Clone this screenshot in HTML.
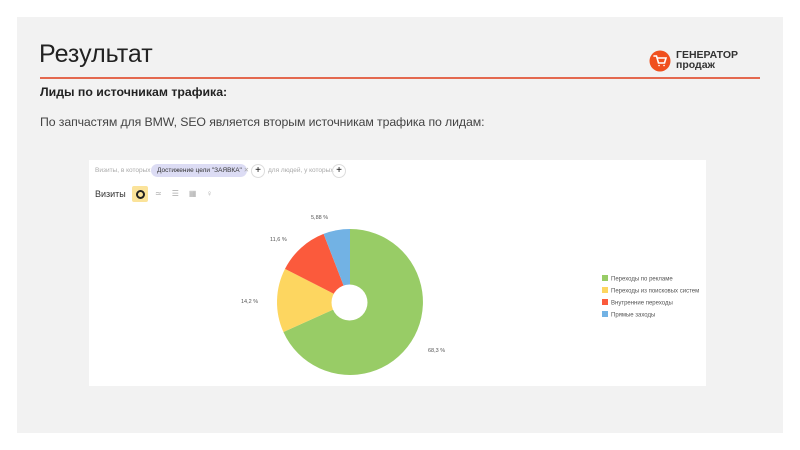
<!DOCTYPE html>
<html><head><meta charset="utf-8"><style>
body{margin:0;width:800px;height:450px;background:#fff;font-family:"Liberation Sans",sans-serif;position:relative;overflow:hidden}
.slide{position:absolute;left:17px;top:17px;width:766px;height:416px;background:#f2f2f2}
.a{position:absolute;white-space:nowrap}
</style></head><body>
<div class="slide"></div>
<div class="a" style="left:39px;top:40px;font-size:25px;color:#222">Результат</div>
<div class="a" style="left:40px;top:77px;width:720px;height:2px;background:#e4694f"></div>
<div class="a" style="left:40px;top:85px;font-size:12.3px;font-weight:bold;color:#222">Лиды по источникам трафика:</div>
<div class="a" style="left:40px;top:115px;font-size:12.3px;color:#444;letter-spacing:-0.1px">По запчастям для BMW, SEO является вторым источникам трафика по лидам:</div>
<svg class="a" style="left:649px;top:50px" width="22" height="22" viewBox="0 0 22 22"><circle cx="11" cy="11" r="10.5" fill="#f0501e"/><path d="M5 6h2.5l2 7h6l1.5-5H8.5M10 15.5h0.1M15 15.5h0.1" stroke="#fff" stroke-width="1.6" fill="none" stroke-linecap="round"/></svg>
<div class="a" style="left:676px;top:50px;font-size:10.5px;font-weight:bold;color:#333;line-height:10px">ГЕНЕРАТОР<br>продаж</div>
<div class="a" style="left:89px;top:160px;width:617px;height:226px;background:#fff"></div>
<div class="a" style="left:95px;top:167px;font-size:6.5px;color:#aaa">Визиты, в которых</div>
<div class="a" style="left:151px;top:164px;width:96px;height:13px;border-radius:7px;background:#dcdcf4;font-size:6.5px;color:#333;line-height:13px;padding-left:6px;box-sizing:border-box">Достижение цели "ЗАЯВКА" <span style="color:#aaa">✕</span></div>
<div class="a" style="left:251px;top:164px;width:12px;height:12px;border-radius:50%;border:1px solid #ddd;text-align:center;font-size:10px;line-height:12px">+</div>
<div class="a" style="left:268px;top:167px;font-size:6.5px;color:#aaa">для людей, у которых</div>
<div class="a" style="left:332px;top:164px;width:12px;height:12px;border-radius:50%;border:1px solid #ddd;text-align:center;font-size:10px;line-height:12px">+</div>
<div class="a" style="left:95px;top:189px;font-size:9px;color:#333">Визиты</div>
<div class="a" style="left:132px;top:186px;width:16px;height:16px;background:#fbe39a;border-radius:2px"></div>
<div class="a" style="left:136px;top:190px;width:5px;height:5px;border:2px solid #222;border-radius:50%"></div>
<div class="a" style="left:155px;top:189px;font-size:8px;color:#aaa;letter-spacing:10px">≃☰▦♀</div>
<svg class="a" style="left:0;top:0" width="800" height="450">
<path d="M350 302 L350 229 A73 73 0 1 1 283.4 332 Z" fill="#98cc66"/>
<path d="M350 302 L283.4 332 A73 73 0 0 1 285 268.9 Z" fill="#fdd660"/>
<path d="M350 302 L285 268.9 A73 73 0 0 1 323.6 233.9 Z" fill="#fb5a3c"/>
<path d="M350 302 L323.6 233.9 A73 73 0 0 1 350 229 Z" fill="#72b2e4"/>
<circle cx="349.5" cy="302.5" r="18" fill="#fff"/>
<g font-size="5.5" fill="#555" font-family="Liberation Sans"><text x="311" y="219">5,88 %</text><text x="270" y="241">11,6 %</text><text x="241" y="303">14,2 %</text><text x="428" y="352">68,3 %</text></g>
<g font-size="6" fill="#555" font-family="Liberation Sans">
<rect x="602" y="275" width="6" height="6" fill="#98cc66"/><text x="611" y="280.5">Переходы по рекламе</text>
<rect x="602" y="287" width="6" height="6" fill="#fdd660"/><text x="611" y="292.5">Переходы из поисковых систем</text>
<rect x="602" y="299" width="6" height="6" fill="#fb5a3c"/><text x="611" y="304.5">Внутренние переходы</text>
<rect x="602" y="311" width="6" height="6" fill="#72b2e4"/><text x="611" y="316.5">Прямые заходы</text></g>
</svg>
</body></html>
